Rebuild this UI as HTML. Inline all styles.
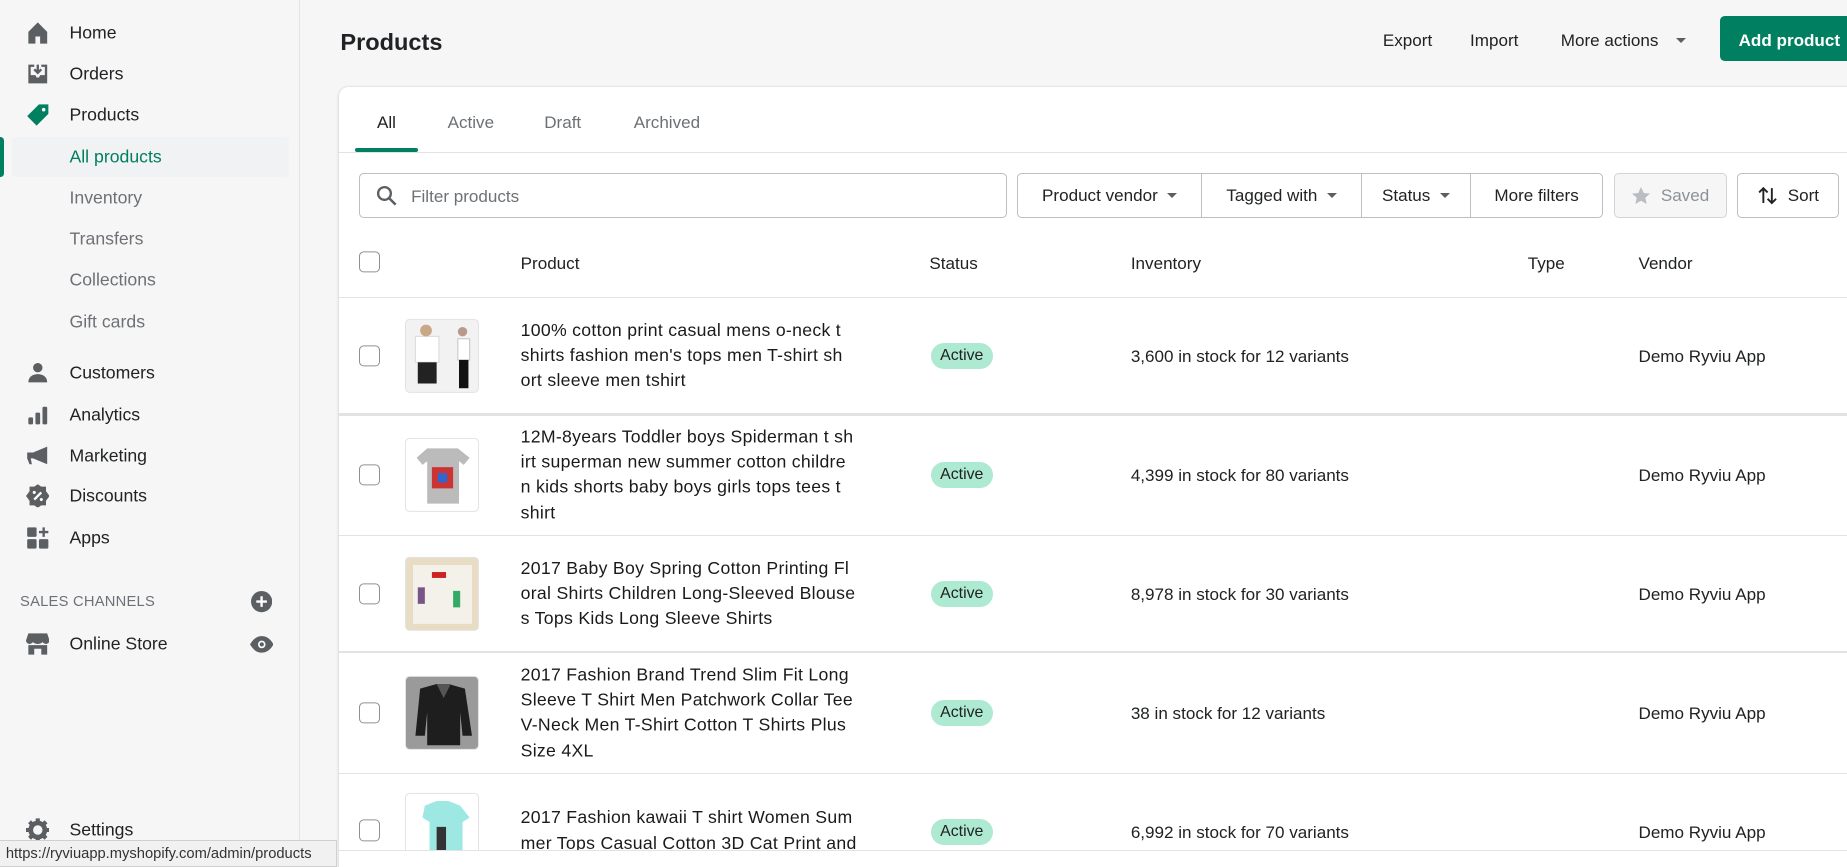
<!DOCTYPE html>
<html><head><meta charset="utf-8"><style>
*{box-sizing:border-box;margin:0;padding:0}
html,body{width:1847px;height:867px;overflow:hidden;background:#f6f6f7}
#w{zoom:1.17793;width:1568px;height:736px;position:relative;font-family:"Liberation Sans",sans-serif;color:#202223;font-size:14px;overflow:hidden}
.a{position:absolute;white-space:nowrap}
.sb{position:absolute;left:0;top:0;width:255px;height:736px;background:#f6f6f7;border-right:1px solid #e1e3e5}
.ni{position:absolute;left:59px;font-size:15px;color:#202223;transform:translateY(-50%)}
.sub{color:#6d7175}
.ic{position:absolute;left:22px;width:20px;height:20px;transform:translateY(-50%)}
.card{position:absolute;left:288px;top:74px;width:1300px;height:662px;background:#fff;border-radius:8px 0 0 0;box-shadow:0 0 0 1px rgba(63,63,68,.05),0 1px 3px rgba(63,63,68,.15)}
.t{font-size:14.5px;color:#202223;transform:translateY(-50%)}
.btn{position:absolute;top:147px;height:38px;border:1px solid #babfc3;background:#fff;font-size:14.5px;display:flex;align-items:center;justify-content:center;gap:8px}
.car{width:0;height:0;border-left:5px solid transparent;border-right:5px solid transparent;border-top:5px solid #5c5f62}
.cb{position:absolute;left:305px;width:18px;height:18px;border:1.5px solid #8c9196;border-radius:4px;background:#fff;transform:translateY(-50%)}
.img{position:absolute;left:344px;width:63px;height:63px;border:1px solid #e1e3e5;border-radius:4px;overflow:hidden;transform:translateY(-50%)}
.pt{position:absolute;left:442px;font-size:15px;line-height:21.5px;transform:translateY(-50%);white-space:nowrap;letter-spacing:.25px;color:#1a1a1a}
.bd{position:absolute;left:790px;height:22px;width:53px;background:#aee9d1;border-radius:11px;font-size:13.5px;color:#202223;display:flex;align-items:center;justify-content:center;transform:translateY(-50%)}
.hr{position:absolute;left:288px;width:1280px;height:1px;background:#e1e3e5}
</style></head><body><div id="w">
<div class="sb">
<svg class="ic" style="top:28px" viewBox="0 0 20 20"><path d="M2 9 10 1l8 8v10h-6v-6H8v6H2z" fill="#5c5f62"/></svg><div class="ni" style="top:28px">Home</div>
<svg class="ic" style="top:63px" viewBox="0 0 20 20"><path d="M2 2h5v2H4v7h4l1 2h2l1-2h4V4h-3V2h5v16H2z" fill="#5c5f62"/><path d="M10 2v7M7 6l3 3 3-3" stroke="#5c5f62" stroke-width="2" fill="none"/></svg><div class="ni" style="top:63px">Orders</div>
<svg class="ic" style="top:98px" viewBox="0 0 20 20"><path d="M11 1h8v8L9 19 1 11zM15 4a1.5 1.5 0 100 3 1.5 1.5 0 000-3z" fill="#008060"/></svg><div class="ni" style="top:98px">Products</div>
<div class="a" style="left:10px;top:116px;width:235px;height:34px;background:#f1f2f3;border-radius:4px"></div>
<div class="a" style="left:0;top:116px;width:3px;height:34px;background:#008060;border-radius:0 3px 3px 0"></div>
<div class="ni" style="top:133px;color:#007f5f">All products</div>
<div class="ni sub" style="top:168px">Inventory</div>
<div class="ni sub" style="top:203px">Transfers</div>
<div class="ni sub" style="top:238px">Collections</div>
<div class="ni sub" style="top:273px">Gift cards</div>
<svg class="ic" style="top:317px" viewBox="0 0 20 20"><circle cx="10" cy="5.5" r="4" fill="#5c5f62"/><path d="M2 18c0-5 4-7 8-7s8 2 8 7z" fill="#5c5f62"/></svg><div class="ni" style="top:317px">Customers</div>
<svg class="ic" style="top:352px" viewBox="0 0 20 20"><rect x="2" y="12" width="4" height="6" rx="1" fill="#5c5f62"/><rect x="8" y="8" width="4" height="10" rx="1" fill="#5c5f62"/><rect x="14" y="3" width="4" height="15" rx="1" fill="#5c5f62"/></svg><div class="ni" style="top:352px">Analytics</div>
<svg class="ic" style="top:387px" viewBox="0 0 20 20"><path d="M1 7h5l12-5v15L6 12H4l1 5H3L1 12z" fill="#5c5f62"/></svg><div class="ni" style="top:387px">Marketing</div>
<svg class="ic" style="top:421px" viewBox="0 0 20 20"><path d="M10 0l3 2h4v4l3 4-3 4v4h-4l-3 2-3-2H3v-4l-3-4 3-4V2h4z" fill="#5c5f62"/><path d="M7 13l6-6" stroke="#fff" stroke-width="2"/><circle cx="7" cy="7" r="1.3" fill="#fff"/><circle cx="13" cy="13" r="1.3" fill="#fff"/></svg><div class="ni" style="top:421px">Discounts</div>
<svg class="ic" style="top:457px" viewBox="0 0 20 20"><rect x="1" y="1" width="8" height="8" rx="1" fill="#5c5f62"/><rect x="1" y="11" width="8" height="8" rx="1" fill="#5c5f62"/><rect x="11" y="11" width="8" height="8" rx="1" fill="#5c5f62"/><path d="M15 1v8M11 5h8" stroke="#5c5f62" stroke-width="2"/></svg><div class="ni" style="top:457px">Apps</div>
<div class="a" style="left:17px;top:504px;font-size:12.5px;color:#6d7175;letter-spacing:.2px">SALES CHANNELS</div>
<svg class="a" style="left:213px;top:502px;width:18px;height:18px" viewBox="0 0 20 20"><circle cx="10" cy="10" r="10" fill="#5c5f62"/><path d="M10 5v10M5 10h10" stroke="#fff" stroke-width="2.2"/></svg>
<svg class="ic" style="top:547px" viewBox="0 0 20 20"><path d="M2 1h16l2 6c0 2-2 3-3 3s-3-1-3-2c0 1-2 2-4 2s-4-1-4-2c0 1-2 2-3 2S0 9 0 7z" fill="#5c5f62"/><path d="M2 11h16v8h-5v-5H7v5H2z" fill="#5c5f62"/></svg><div class="ni" style="top:547px">Online Store</div>
<svg class="a" style="left:212px;top:539px;width:20px;height:16px" viewBox="0 0 20 16"><path d="M0 8c3-5 6-7 10-7s7 2 10 7c-3 5-6 7-10 7S3 13 0 8z" fill="#5c5f62"/><circle cx="10" cy="8" r="3.2" fill="#fff"/><circle cx="10" cy="8" r="1.8" fill="#5c5f62"/></svg>
<svg class="ic" style="top:705px" viewBox="0 0 20 20"><circle cx="10" cy="10" r="6" fill="none" stroke="#5c5f62" stroke-width="4"/><path d="M10 0v4M10 16v4M0 10h4M16 10h4M3 3l3 3M14 14l3 3M3 17l3-3M14 6l3-3" stroke="#5c5f62" stroke-width="3.5"/></svg><div class="ni" style="top:705px">Settings</div>
</div>
<div class="a" style="left:289px;top:25px;font-size:20px;font-weight:600;color:#202223">Products</div>
<div class="a t" style="left:1174px;top:35px">Export</div>
<div class="a t" style="left:1248px;top:35px">Import</div>
<div class="a t" style="left:1325px;top:35px">More actions</div>
<div class="a car" style="left:1423px;top:32px"></div>
<div class="a" style="left:1460px;top:14px;width:120px;height:38px;background:#008060;border-radius:4px;color:#fff;font-size:14.5px;font-weight:bold;padding:12px 0 0 16px">Add product</div>
<div class="card"></div>
<div class="a t" style="left:320px;top:104px">All</div>
<div class="a" style="left:301px;top:126px;width:54px;height:3px;background:#008060;border-radius:2px"></div>
<div class="a t" style="left:380px;top:104px;color:#6d7175">Active</div>
<div class="a t" style="left:462px;top:104px;color:#6d7175">Draft</div>
<div class="a t" style="left:538px;top:104px;color:#6d7175">Archived</div>
<div class="hr" style="top:129px"></div>
<div class="a" style="left:305px;top:147px;width:550px;height:38px;border:1px solid #babfc3;border-radius:4px;background:#fff"></div>
<svg class="a" style="left:319px;top:157px;width:18px;height:18px" viewBox="0 0 20 20"><circle cx="8" cy="8" r="6" fill="none" stroke="#5c5f62" stroke-width="2.2"/><path d="M12.5 12.5l6 6" stroke="#5c5f62" stroke-width="2.4"/></svg>
<div class="a t" style="left:349px;top:167px;color:#6d7175">Filter products</div>
<div class="btn" style="left:863px;width:158px;border-radius:4px 0 0 4px">Product vendor<span class="car"></span></div>
<div class="btn" style="left:1020px;width:136px">Tagged with<span class="car"></span></div>
<div class="btn" style="left:1155px;width:94px">Status<span class="car"></span></div>
<div class="btn" style="left:1248px;width:113px;border-radius:0 4px 4px 0">More filters</div>
<div class="btn" style="left:1370px;width:96px;border-radius:4px;background:#f6f6f7;border-color:#d2d5d8;color:#8c9196"><svg width="17" height="17" viewBox="0 0 20 20"><path d="M10 1l2.8 6 6.2.6-4.7 4.2 1.4 6.2L10 14.8 4.3 18l1.4-6.2L1 7.6 7.2 7z" fill="#babec3"/></svg>Saved</div>
<div class="btn" style="left:1475px;width:86px;border-radius:4px"><svg width="18" height="18" viewBox="0 0 20 20"><path d="M6 17V3M2 7l4-4 4 4M14 3v14M10 13l4 4 4-4" stroke="#202223" stroke-width="1.8" fill="none"/></svg>Sort</div>
<div class="cb" style="top:222px"></div>
<div class="a t" style="left:442px;top:224px">Product</div>
<div class="a t" style="left:789px;top:224px">Status</div>
<div class="a t" style="left:960px;top:224px">Inventory</div>
<div class="a t" style="left:1297px;top:224px">Type</div>
<div class="a t" style="left:1391px;top:224px">Vendor</div>
<div class="hr" style="top:252px"></div>

<div class="cb" style="top:302px"></div>
<div class="img" style="top:302px;background:#f2f2f2"><svg width="63" height="63"><rect x="8" y="14" width="20" height="22" fill="#fff" stroke="#ddd"/><circle cx="17" cy="9" r="5" fill="#c9a88a"/><rect x="10" y="36" width="16" height="18" fill="#222"/><rect x="44" y="16" width="10" height="18" fill="#fff" stroke="#ccc"/><circle cx="48" cy="10" r="4" fill="#b98"/><rect x="45" y="34" width="8" height="24" fill="#111"/></svg></div>
<div class="pt" style="top:302px">100% cotton print casual mens o-neck t<br>shirts fashion men's tops men T-shirt sh<br>ort sleeve men tshirt</div>
<div class="bd" style="top:302px">Active</div>
<div class="a t" style="left:960px;top:303px">3,600 in stock for 12 variants</div>
<div class="a t" style="left:1391px;top:303px">Demo Ryviu App</div>
<div class="hr" style="top:351px;height:2px"></div>

<div class="cb" style="top:403px"></div>
<div class="img" style="top:403px;background:#fff"><svg width="63" height="63"><path d="M18 8h26l10 8-5 6-4-3v36H18V19l-4 3-5-6z" fill="#bbb"/><rect x="22" y="24" width="18" height="18" fill="#c33"/><rect x="27" y="29" width="8" height="8" fill="#36c"/></svg></div>
<div class="pt" style="top:403px">12M-8years Toddler boys Spiderman t sh<br>irt superman new summer cotton childre<br>n kids shorts baby boys girls tops tees t<br>shirt</div>
<div class="bd" style="top:403px">Active</div>
<div class="a t" style="left:960px;top:404px">4,399 in stock for 80 variants</div>
<div class="a t" style="left:1391px;top:404px">Demo Ryviu App</div>
<div class="hr" style="top:454px"></div>

<div class="cb" style="top:504px"></div>
<div class="img" style="top:504px;background:#e8dcc4"><svg width="63" height="63"><rect x="6" y="6" width="50" height="50" fill="#f4f1ea"/><rect x="22" y="12" width="12" height="5" fill="#c22"/><rect x="10" y="25" width="6" height="14" fill="#758"/><rect x="40" y="28" width="6" height="14" fill="#3a6"/></svg></div>
<div class="pt" style="top:504px">2017 Baby Boy Spring Cotton Printing Fl<br>oral Shirts Children Long-Sleeved Blouse<br>s Tops Kids Long Sleeve Shirts</div>
<div class="bd" style="top:504px">Active</div>
<div class="a t" style="left:960px;top:505px">8,978 in stock for 30 variants</div>
<div class="a t" style="left:1391px;top:505px">Demo Ryviu App</div>
<div class="hr" style="top:553px"></div>

<div class="cb" style="top:605px"></div>
<div class="img" style="top:605px;background:#9a9a9a"><svg width="63" height="63"><path d="M12 10l14-4h10l14 4 6 40h-8l-2-20v28H18V30l-2 20H8z" fill="#1e1e1e"/><path d="M26 6l6 12 6-12" fill="#555"/></svg></div>
<div class="pt" style="top:605px">2017 Fashion Brand Trend Slim Fit Long<br>Sleeve T Shirt Men Patchwork Collar Tee<br>V-Neck Men T-Shirt Cotton T Shirts Plus<br>Size 4XL</div>
<div class="bd" style="top:605px">Active</div>
<div class="a t" style="left:960px;top:606px">38 in stock for 12 variants</div>
<div class="a t" style="left:1391px;top:606px">Demo Ryviu App</div>
<div class="hr" style="top:656px"></div>

<div class="cb" style="top:705px"></div>
<div class="img" style="top:705px;background:#fff"><svg width="63" height="63"><path d="M16 10l10-4h10l10 4 8 10-6 4v40H20V24l-6-4z" fill="#9ee8e4"/><rect x="26" y="28" width="8" height="20" fill="#333"/></svg></div>
<div class="pt" style="top:716px">2017 Fashion kawaii T shirt Women Sum<br>mer Tops Casual Cotton 3D Cat Print and<br>Short Sleeve Casual Harajuku Tee</div>
<div class="bd" style="top:706px">Active</div>
<div class="a t" style="left:960px;top:707px">6,992 in stock for 70 variants</div>
<div class="a t" style="left:1391px;top:707px">Demo Ryviu App</div>
<div class="a" style="left:288px;top:722px;width:1280px;height:14px;background:#fff;border-top:1px solid #e1e3e5"></div>

<div class="a" style="left:0;top:713px;width:286px;height:23px;background:#f1f1f1;border:1px solid #d0d0d0;border-left:0;font-size:12.5px;color:#333;padding:4px 0 0 5px">https://ryviuapp.myshopify.com/admin/products</div>
</div></body></html>
